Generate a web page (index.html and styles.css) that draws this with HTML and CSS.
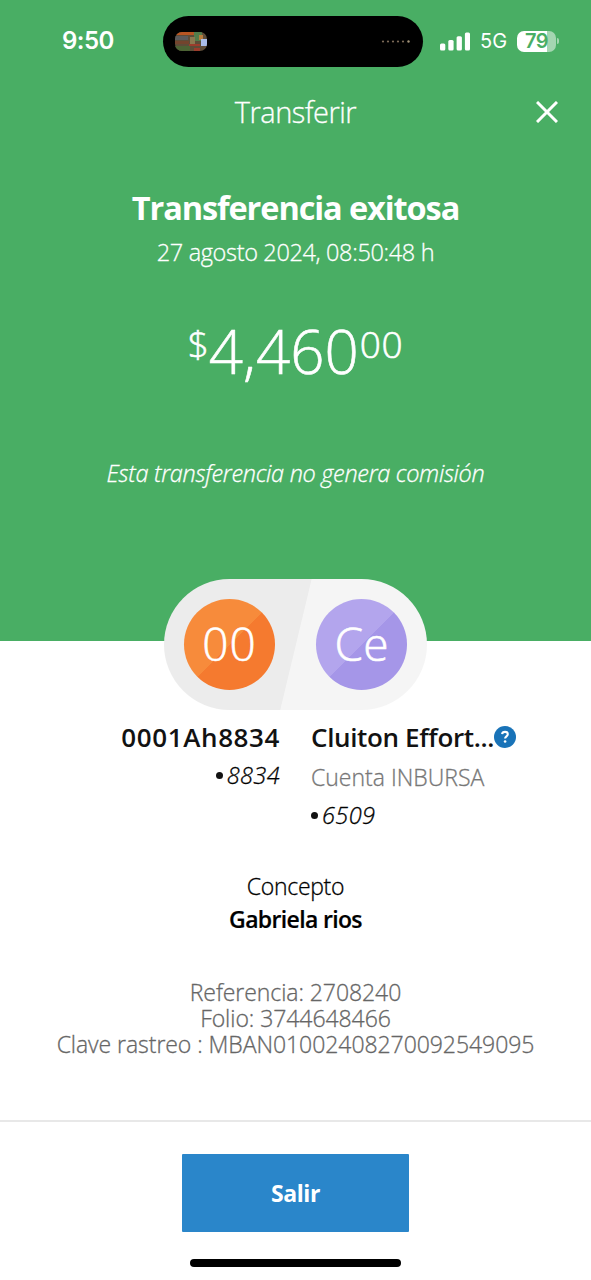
FILE: index.html
```html
<!DOCTYPE html>
<html lang="es">
<head>
<meta charset="utf-8">
<meta name="viewport" content="width=device-width, initial-scale=1">
<title>Transferir</title>
<link rel="stylesheet" href="styles.css">
</head>
<body>
<div class="screen">
  <header class="hero">
    <div class="status">
      <span class="clock">9:50</span>
      <div class="island">
        <svg class="thumb" width="32" height="19" viewBox="0 0 32 19">
          <defs><clipPath id="thumb-clip"><rect width="32" height="19" rx="7"/></clipPath></defs>
          <g clip-path="url(#thumb-clip)">
            <rect width="32" height="19" fill="#5d4c38"/>
            <path d="M0 0h19v3H0z" fill="#b85523"/>
            <path d="M0 4h13v4H0z" fill="#5b5a5c"/>
            <path d="M0 9h14v3H0z" fill="#73442d"/>
            <path d="M0 14h15v5H0z" fill="#4c6334"/>
            <path d="M19 0h8v9h-8z" fill="#527d4b"/>
            <path d="M15 5h5v7h-5z" fill="#8b7950"/>
            <path d="M14 12h11v2H14zM19 16h6v3h-6z" fill="#9b3c2c"/>
            <path d="M24 3h4v5h-4z" fill="#b57b3c"/>
            <path d="M26 7h6v7h-6z" fill="#a9bce8"/>
          </g>
        </svg>
        <svg class="dots" width="30" height="3" viewBox="0 0 30 3" fill="#7d6b58">
          <circle cx="2" cy="1.5" r="1.1"/><circle cx="7" cy="1.5" r="1.1"/><circle cx="12" cy="1.5" r="1.1"/><circle cx="17" cy="1.5" r="1.1"/><circle cx="22" cy="1.5" r="1.1"/><circle cx="27.5" cy="1.5" r="1.2" fill="#a39378"/>
        </svg>
      </div>
      <svg class="signal" width="30" height="19" viewBox="0 0 30 19" fill="#fff">
        <rect x="0" y="11.5" width="5.3" height="7" rx="1.5"/><rect x="8.3" y="8" width="5.3" height="10.5" rx="1.5"/><rect x="16.6" y="4.2" width="5.3" height="14.3" rx="1.5"/><rect x="24.9" y="0.5" width="5.1" height="18" rx="1.5"/>
      </svg>
      <span class="network">5G</span>
      <div class="battery"><span class="battery-body">79</span><span class="battery-cap"></span></div>
    </div>
    <div class="navbar">
      <span class="nav-title">Transferir</span>
      <svg class="close" width="22" height="22" viewBox="0 0 22 22"><path d="M1 1l20 20M21 1L1 21" stroke="#fff" stroke-width="3" fill="none"/></svg>
    </div>
    <h1 class="title">Transferencia exitosa</h1>
    <p class="date">27 agosto 2024, 08:50:48 h</p>
    <p class="amount"><span class="currency">$</span><span class="whole">4,460</span><span class="cents">00</span></p>
    <p class="note">Esta transferencia no genera comisión</p>
  </header>
  <main class="content">
    <div class="pill">
      <span class="avatar avatar-from">00</span>
      <span class="avatar avatar-to">Ce</span>
    </div>
    <section class="parties">
      <div class="party party-from">
        <p class="name name-from">0001Ah8834</p>
        <p class="account"><span class="bullet"></span>8834</p>
      </div>
      <div class="party party-to">
        <p class="name name-to"><span>Cluiton Effort...</span><svg class="help" width="22" height="22" viewBox="0 0 22 22"><circle cx="11" cy="11" r="11" fill="#1973b8"/><path d="M8.1 8.2C8.3 6.5 9.5 5.9 11 5.9c1.600 0 2.800.9 2.800 2.400 0 2.200-2.700 2.100-2.700 4.300" fill="none" stroke="#fff" stroke-width="2.1"/><circle cx="11.1" cy="15.5" r="1.3" fill="#fff"/></svg></p>
        <p class="bank">Cuenta INBURSA</p>
        <p class="account"><span class="bullet"></span>6509</p>
      </div>
    </section>
    <section class="concept">
      <p class="concept-label">Concepto</p>
      <p class="concept-value">Gabriela rios</p>
    </section>
    <p class="details">Referencia: 2708240<br>Folio: 3744648466<br>Clave rastreo : MBAN01002408270092549095</p>
  </main>
  <footer class="footer">
    <button class="exit">Salir</button>
    <div class="home"></div>
  </footer>
</div>
</body>
</html>
```
FILE: styles.css
```css
* { box-sizing: border-box; }
body { margin: 0; background: #fff; font-family: "Open Sans", "Noto Sans", sans-serif; font-weight: 300; color: #121212; }
h1, p { margin: 0; white-space: nowrap; }
svg { display: block; flex: none; }
.screen { width: 591px; height: 1280px; display: flex; flex-direction: column; overflow: hidden; }

.hero { height: 641px; flex: none; background: #49ae64; color: #fff; text-align: center; }
.status { height: 82px; display: flex; align-items: center; padding-left: 62px; font-family: Inter, sans-serif; }
.clock { width: 101px; font-size: 24px; font-weight: 600; letter-spacing: -0.5px; line-height: 30px; text-align: left; }
.island { width: 260px; height: 51px; border-radius: 26px; background: #000; display: flex; align-items: center; justify-content: space-between; padding: 0 12px; }
.signal { margin-left: 17px; }
.network { margin-left: 10px; width: 37px; font-size: 20px; font-weight: 400; text-align: left; line-height: 30px; }
.battery { display: flex; align-items: center; gap: 1px; }
.battery-body { width: 39px; height: 21px; border-radius: 7px; background: linear-gradient(90deg, #fff 78%, #a4d6b1 78%); color: #49ae64; font-size: 20px; font-weight: 600; line-height: 21px; text-align: center; letter-spacing: -0.5px; }
.battery-cap { width: 2px; height: 6px; border-radius: 0 2px 2px 0; background: #a4d6b1; }

/* Light text gets a hairline stroke for a book-light weight. */
.nav-title, .date, .note, .account, .bank, .concept-label, .details { -webkit-text-stroke: 0.3px currentColor; }
.amount, .avatar { -webkit-text-stroke: 0.6px currentColor; }

.navbar { height: 60px; display: grid; grid-template-columns: 1fr auto 1fr; align-items: center; padding: 0 33px; }
.nav-title { grid-column: 2; font-size: 29px; line-height: 58px; letter-spacing: -0.5px; }
.close { justify-self: end; }
.title { margin-top: 42px; font-size: 32.5px; font-weight: 700; line-height: 48px; letter-spacing: -1.1px; }
.date { margin-top: 4px; font-size: 23.5px; line-height: 32px; letter-spacing: -0.35px; }
.amount { margin-top: 43px; height: 80px; display: flex; justify-content: center; line-height: 80px; }
.whole { font-size: 60px; line-height: 81px; }
.cents { margin-left: 1px; font-size: 37px; line-height: 66px; letter-spacing: 0.7px; }
.currency { margin-right: 0; font-size: 37px; line-height: 66px; }
.note { margin-top: 66px; font-size: 23.5px; font-style: italic; line-height: 32px; letter-spacing: -0.3px; }

.content { height: 479px; flex: none; }
.pill { position: relative; width: 263px; height: 131px; margin: -62px auto 0; border-radius: 66px; background: linear-gradient(103.5deg, #ececec 50%, #f5f5f5 50.3%); display: flex; align-items: center; justify-content: space-between; padding: 0 20px; }
.avatar { width: 91px; height: 91px; border-radius: 50%; color: #fff; font-size: 46px; line-height: 89px; text-align: center; }
.avatar-from { background: linear-gradient(135deg, #f78b3b 50%, #f57a2f 50.5%); letter-spacing: 1px; }
.avatar-to { background: linear-gradient(135deg, #b3a5ed 50%, #a596e8 50.5%); }
.parties { display: grid; grid-template-columns: 280px 280px; column-gap: 31px; margin-top: 8px; }
.party-from { display: flex; flex-direction: column; align-items: flex-end; }
.name { height: 38px; display: flex; align-items: center; font-size: 26px; font-weight: 600; line-height: 38px; }
.name-from { letter-spacing: 0.6px; }
.name-to { letter-spacing: -0.35px; }
.account { display: flex; align-items: center; gap: 4px; height: 38px; font-size: 23.5px; font-style: italic; line-height: 38px; letter-spacing: 0.4px; color: #000; }
.bullet { width: 7px; height: 7px; border-radius: 50%; background: #121212; }
.bank { height: 40px; font-size: 23px; line-height: 42px; color: #777; }
.concept { margin-top: 36px; text-align: center; font-size: 23px; line-height: 32px; color: #000; }
.concept-label { letter-spacing: -0.3px; }
.concept-value { font-weight: 600; line-height: 34px; letter-spacing: -0.65px; -webkit-text-stroke: 0.2px currentColor; }
.details { margin-top: 43px; text-align: center; font-size: 23px; line-height: 26px; letter-spacing: -0.06px; color: #666; }

.footer { height: 160px; border-top: 2px solid #e8e8e8; display: flex; flex-direction: column; align-items: center; padding-top: 32px; }
.exit { width: 227px; height: 78px; border: 0; border-radius: 1px; padding: 0; background: #2a86ca; color: #fff; font: 700 23px/78px "Open Sans", sans-serif; letter-spacing: -0.4px; }
.home { width: 211px; height: 8px; border-radius: 4px; margin-top: 27px; background: #000; }
```
